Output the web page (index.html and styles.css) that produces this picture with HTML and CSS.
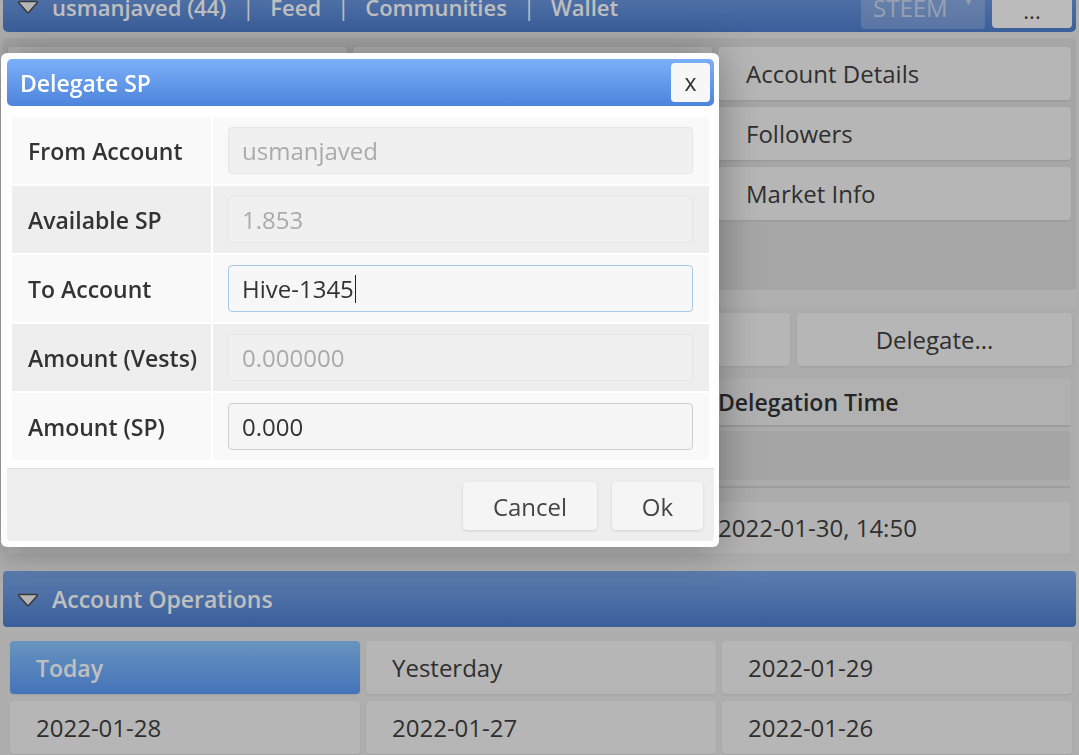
FILE: index.html
```html
<!DOCTYPE html>
<html lang="en">
<head>
<meta charset="utf-8">
<title>Wallet</title>
<link rel="stylesheet" href="styles.css">
</head>
<body>
<div class="page">
  <header class="topbar">
    <svg class="caret" viewBox="0 0 24 16" width="22" height="15"><path d="M3 2.5 H21 Q23 2.5 21.8 4.2 L13.4 13.8 Q12 15.3 10.6 13.8 L2.2 4.2 Q1 2.5 3 2.5 Z" fill="#f2f2f2" stroke="#4a4a4a" stroke-width="1.6"/></svg>
    <nav class="crumbs">
      <span>usmanjaved (44)</span><span class="pipe">|</span><span>Feed</span><span class="pipe">|</span><span>Communities</span><span class="pipe">|</span><span>Wallet</span>
    </nav>
    <div class="chain-select">STEEM<span class="arrow">&#9660;</span></div>
    <button class="more">...</button>
  </header>

  <section class="panel account-panel">
    <div class="col">
      <div class="btn tall"></div>
    </div>
    <div class="col">
      <div class="btn"></div>
      <div class="btn"></div>
      <div class="btn"></div>
    </div>
    <div class="col">
      <div class="btn">Account Details</div>
      <div class="btn">Followers</div>
      <div class="btn">Market Info</div>
    </div>
  </section>

  <div class="divider"></div>

  <section class="panel delegation-panel">
    <div class="actions">
      <div class="btn"></div>
      <div class="btn"></div>
      <div class="btn"></div>
      <div class="btn center">Delegate...</div>
    </div>
    <div class="table">
      <div class="trow head">
        <div class="cell"></div>
        <div class="cell"></div>
        <div class="cell">Delegation Time</div>
      </div>
      <div class="trow filter">
        <div class="cell"><div class="box"></div></div>
        <div class="cell"><div class="box"></div></div>
        <div class="cell"><div class="box"></div></div>
      </div>
      <div class="trow data">
        <div class="cell"><div class="box"></div></div>
        <div class="cell"><div class="box"></div></div>
        <div class="cell"><div class="box">2022-01-30, 14:50</div></div>
      </div>
    </div>
  </section>

  <section class="ops">
    <header class="ops-bar">
      <svg class="caret" viewBox="0 0 24 16" width="22" height="15"><path d="M3 2.5 H21 Q23 2.5 21.8 4.2 L13.4 13.8 Q12 15.3 10.6 13.8 L2.2 4.2 Q1 2.5 3 2.5 Z" fill="#f2f2f2" stroke="#4a4a4a" stroke-width="1.6"/></svg>
      <span>Account Operations</span>
    </header>
    <div class="days">
      <div class="btn active">Today</div>
      <div class="btn">Yesterday</div>
      <div class="btn">2022-01-29</div>
      <div class="btn">2022-01-28</div>
      <div class="btn">2022-01-27</div>
      <div class="btn">2022-01-26</div>
    </div>
  </section>
</div>

<div class="overlay"></div>

<div class="dialog">
  <div class="dialog-title">
    <span>Delegate SP</span>
    <button class="close">x</button>
  </div>
  <div class="dialog-body">
    <div class="frow odd">
      <div class="flabel">From Account</div>
      <div class="fvalue"><div class="field disabled">usmanjaved</div></div>
    </div>
    <div class="frow even">
      <div class="flabel">Available SP</div>
      <div class="fvalue"><div class="field disabled">1.853</div></div>
    </div>
    <div class="frow odd">
      <div class="flabel">To Account</div>
      <div class="fvalue"><div class="field focus"><span class="typed">Hive-1345</span></div></div>
    </div>
    <div class="frow even">
      <div class="flabel">Amount (Vests)</div>
      <div class="fvalue"><div class="field disabled">0.000000</div></div>
    </div>
    <div class="frow odd">
      <div class="flabel">Amount (SP)</div>
      <div class="fvalue"><div class="field plain">0.000</div></div>
    </div>
  </div>
  <div class="dialog-foot">
    <button class="fbtn cancel">Cancel</button>
    <button class="fbtn ok">Ok</button>
  </div>
</div>
</body>
</html>
```

FILE: styles.css
```css
* { box-sizing: border-box; }

html, body {
  margin: 0;
  height: 100%;
}

body {
  background: #e8e8e8;
  font-family: "Open Sans", "Noto Sans", sans-serif;
  font-size: 24px;
  color: #444;
  overflow: hidden;
  position: relative;
}

button {
  font-family: inherit;
  font-size: inherit;
  border: none;
  cursor: pointer;
}

.page {
  padding: 0 3px;
}

/* top navigation bar */
.topbar {
  margin-top: -22px;
  height: 54px;
  border-radius: 0 0 5px 5px;
  background: linear-gradient(#7aa3e6, #4f7fcf);
  display: flex;
  align-items: center;
  padding: 18px 4px 0 14px;
  color: #fff;
  font-weight: 600;
  font-size: 22px;
}

.topbar .caret {
  flex: none;
  margin-top: -16px;
}

.crumbs {
  flex: 1;
  display: flex;
  margin-left: 13px;
  margin-top: -14px;
}

.crumbs .pipe {
  margin: 0 16px;
  font-weight: 400;
}

.chain-select {
  width: 124px;
  height: 43px;
  margin-top: -14px;
  background: rgba(255, 255, 255, 0.22);
  border-radius: 4px;
  color: #c8d6ee;
  font-weight: 400;
  font-size: 24px;
  padding: 0 12px;
  display: flex;
  align-items: center;
  justify-content: space-between;
  margin-right: 7px;
}

.chain-select .arrow {
  font-size: 9px;
  margin-top: -12px;
}

.more {
  width: 80px;
  height: 42px;
  margin-top: -14px;
  background: #fafafa;
  border-radius: 4px;
  color: #444;
  padding-top: 6px;
  font-size: 22px;
}

/* generic button look */
.btn {
  height: 53px;
  background: #f3f3f3;
  border-radius: 4px;
  padding: 0 26px;
  display: flex;
  align-items: center;
  color: #3f3f3f;
  box-shadow: 0 1px 2px rgba(0, 0, 0, 0.08);
}

.btn.center { justify-content: center; }

/* account panel */
.account-panel {
  margin-top: 6px;
  background: #dedede;
  height: 252px;
  padding: 9px 5px;
  display: grid;
  grid-template-columns: 339px 359px 1fr;
  column-gap: 6px;
  border-radius: 4px;
}

.account-panel .btn { padding-left: 28px; }

.col {
  display: flex;
  flex-direction: column;
  gap: 7px;
}

.btn.tall { height: 173px; }

.divider {
  height: 17px;
  background: #ebebeb;
}

/* delegation list */
.delegation-panel {
  background: #e6e6e6;
  padding: 6px 4px 10px 5px;
}

.actions {
  display: grid;
  grid-template-columns: 1fr 1fr 1fr 275px;
  gap: 7px;
}

.table {
  margin-top: 13px;
  padding-right: 2px;
}

.trow {
  display: grid;
  grid-template-columns: 355px 352px 1fr;
}

.trow .cell {
  display: flex;
  align-items: center;
}

.trow.head {
  height: 48px;
  background: #ececec;
  border-bottom: 2px solid #cfcfcf;
  font-weight: 600;
  font-size: 23px;
  color: #333;
}

.trow.head .cell { padding-left: 3px; }

.trow.filter {
  height: 61px;
  border-bottom: 2px solid #d2d2d2;
  padding: 4px 0 6px;
}

.trow.filter .box {
  width: 100%;
  height: 49px;
  background: #dcdcdc;
  border-radius: 3px;
}

.trow.data {
  margin-top: 13px;
  height: 53px;
}

.trow.data .box {
  width: 100%;
  height: 51px;
  background: #efefef;
  display: flex;
  align-items: center;
  padding-left: 3px;
  color: #3f3f3f;
}

/* account operations */
.ops { margin-top: 7px; }

.ops-bar {
  height: 56px;
  border-radius: 4px;
  background: linear-gradient(#7aa6e8, #4f7fcf);
  display: flex;
  align-items: center;
  padding-left: 14px;
  gap: 13px;
  color: #fff;
  font-weight: 600;
  font-size: 23px;
}

.days {
  padding: 14px 4px 0 7px;
  display: grid;
  grid-template-columns: repeat(3, 1fr);
  gap: 7px 6px;
}

.btn.active {
  background: linear-gradient(#8ac6ff, #5d9af7);
  color: #fff;
  font-weight: 600;
  font-size: 23px;
}

/* modal backdrop */
.overlay {
  position: fixed;
  inset: 0;
  background: rgba(0, 0, 0, 0.25);
}

/* delegate dialog */
.dialog {
  position: absolute;
  left: 1px;
  top: 53px;
  width: 718px;
  height: 494px;
  background: #fdfdfd;
  border-radius: 6px;
  padding: 6px 5px 6px 6px;
  box-shadow: 0 0 40px rgba(0, 0, 0, 0.35);
  display: flex;
  flex-direction: column;
}

.dialog-title {
  height: 47px;
  flex: none;
  border-radius: 5px;
  background: linear-gradient(#7bb0f8, #4d84dc);
  display: flex;
  align-items: center;
  justify-content: space-between;
  padding: 0 4px 0 13px;
  color: #fff;
  font-weight: 600;
  font-size: 23px;
}

.close {
  width: 39px;
  height: 39px;
  background: #f7f7f7;
  border-radius: 4px;
  color: #333;
  padding: 0;
  line-height: 39px;
  font-size: 23px;
}

.dialog-body {
  margin-top: 5px;
  background: #fff;
  padding: 6px 5px 6px 5px;
  display: flex;
  flex-direction: column;
  gap: 2px;
}

.frow {
  height: 67px;
  display: flex;
}

.frow.odd { background: #f9f9f9; }
.frow.even { background: #eeeeee; }

.flabel {
  width: 201px;
  flex: none;
  border-right: 2px solid #fff;
  padding-left: 16px;
  display: flex;
  align-items: center;
  font-weight: 600;
  font-size: 23px;
  color: #333;
}

.fvalue {
  flex: 1;
  padding: 0 16px 0 15px;
  display: flex;
  align-items: center;
}

.field {
  width: 100%;
  height: 47px;
  border-radius: 4px;
  padding: 0 13px;
  display: flex;
  align-items: center;
  color: #333;
}

.field.disabled {
  background: #f0f0f0;
  border: 1px solid #e6e6e6;
  color: #aaa;
}

.field.focus {
  background: #f7f7f7;
  border: 1px solid #a9c8e6;
}

.field.plain {
  background: #f5f5f5;
  border: 1px solid #cfcfcf;
}

.typed {
  border-right: 1.5px solid #222;
  padding-right: 1px;
  line-height: 28px;
}

.dialog-foot {
  flex: 1;
  margin-top: 2px;
  background: #eeeeee;
  border-top: 1px solid #dedede;
  border-radius: 0 0 4px 4px;
  display: flex;
  justify-content: flex-end;
  align-items: flex-start;
  gap: 15px;
  padding: 13px 11px 0 0;
}

.fbtn {
  height: 48px;
  background: #f5f5f5;
  border-radius: 4px;
  color: #444;
  box-shadow: 0 1px 3px rgba(0, 0, 0, 0.12);
}

.fbtn.cancel { width: 134px; }
.fbtn.ok { width: 91px; }
```
